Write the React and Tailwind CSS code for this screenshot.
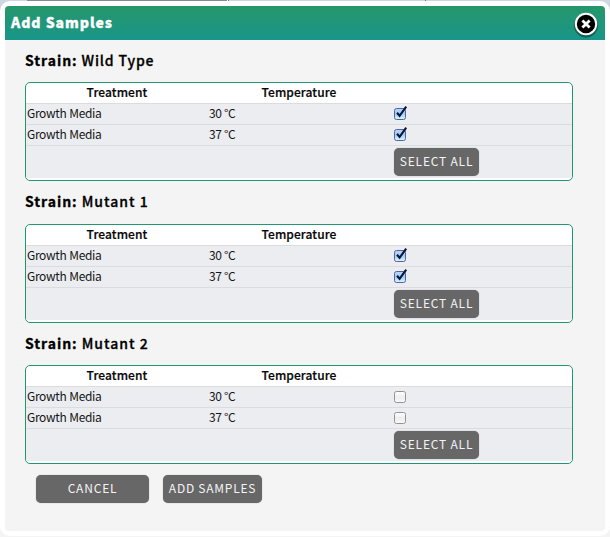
import React from 'react';

const groups = [
  { name: 'Wild Type', checked: true, tracking: 'tracking-[0.85px]', space: '', offset: 'mt-[9px]' },
  { name: 'Mutant 1', checked: true, tracking: 'tracking-[1px]', space: 'mt-[10px]', offset: 'mt-[10px]' },
  { name: 'Mutant 2', checked: false, tracking: 'tracking-[1px]', space: 'mt-[10px]', offset: 'mt-[9px]' },
];

function Button({ children, className }) {
  return (
    <button
      className={`flex h-7 items-center justify-center rounded-[5px] bg-[#676767] pb-[2px] text-[12px] leading-none whitespace-nowrap text-[#f4f4f4] shadow-[0_0_1px_#888] ${className}`}
    >
      {children}
    </button>
  );
}

function Checkbox({ checked }) {
  return (
    <svg width="15" height="16" viewBox="0 0 15 16" className="block">
      <defs>
        <linearGradient id="on" x1="0" y1="0" x2="0" y2="1">
          <stop offset="0" stopColor="#b9d7f5" />
          <stop offset="0.5" stopColor="#9fcdf6" />
          <stop offset="1" stopColor="#dcfaff" />
        </linearGradient>
        <linearGradient id="off" x1="0" y1="0" x2="0" y2="1">
          <stop offset="0" stopColor="#ffffff" />
          <stop offset="0.5" stopColor="#eeeeee" />
          <stop offset="1" stopColor="#fafafa" />
        </linearGradient>
      </defs>
      <rect
        x="0.5"
        y="3.5"
        width="11"
        height="11"
        rx="2"
        fill={checked ? 'url(#on)' : 'url(#off)'}
        stroke={checked ? '#5a5fa5' : '#929295'}
      />
      {checked && (
        <path d="M3 7.8 L5.6 10.8 L12.2 1.6" fill="none" stroke="#0a1636" strokeWidth="2.1" />
      )}
    </svg>
  );
}

function Row({ temp, checked }) {
  return (
    <div className="flex h-[21px] border-t border-[#dcdcde] bg-[#ecedf1] text-[12px] leading-[18px] tracking-[-0.35px] text-[#151515] [word-spacing:0.6px]">
      <div className="w-[183px] pl-px">Growth Media</div>
      <div className="w-[185px] tracking-[-0.5px]">{temp}</div>
      <div className="pt-px">
        <Checkbox checked={checked} />
      </div>
    </div>
  );
}

function StrainTable({ checked, offset }) {
  return (
    <div className={`h-[99px] overflow-hidden rounded-[5px] border border-[#22966f] bg-white ${offset}`}>
      <div className="flex h-5 text-[12px] leading-[17px] font-medium tracking-[0.1px] text-[#050505] [-webkit-text-stroke:0.2px_#050505]">
        <div className="w-[182px] text-center">Treatment</div>
        <div className="w-[182px] text-center">Temperature</div>
      </div>
      <Row temp="30 °C" checked={checked} />
      <Row temp="37 °C" checked={checked} />
      <div className="h-[33px] border-t border-[#dcdcde] bg-[#ecedf1] pt-[2px] pl-[368px]">
        <Button className="w-[85px] tracking-[0.8px]">SELECT ALL</Button>
      </div>
    </div>
  );
}

export default function App() {
  return (
    <div className="h-[537px] w-[610px] overflow-hidden bg-[linear-gradient(#d0d6df_0_50%,#f4f4f4_50%)] font-['Noto_Sans_CJK_SC','Noto_Sans',sans-serif]">
      <div className="flex h-px">
        <div className="w-[27px]" />
        <div className="w-[200px] bg-[#858b96]" />
        <div className="w-px bg-white" />
        <div className="w-px bg-[#777]" />
        <div className="w-[196px]" />
        <div className="w-px bg-[#777]" />
      </div>
      <div className="h-[535px] rounded-[10px] bg-white p-[5px]">
        <div className="h-[525px] overflow-hidden rounded-[4px] bg-[#f4f4f4]">
          <header className="flex h-[34px] justify-between bg-linear-to-b from-[#26966a] to-[#19968a] pr-[5px] pl-[6px]">
            <h1 className="text-[14px] leading-[33px] font-black tracking-[0.95px] text-white [-webkit-text-stroke:0.3px_white]">
              Add Samples
            </h1>
            <svg width="28" height="30" viewBox="0 0 28 30" className="mt-[4px]">
              <circle cx="14" cy="15.5" r="12" fill="#000" opacity="0.35" />
              <circle cx="14" cy="14" r="10.2" fill="#000" stroke="#fff" strokeWidth="2" />
              <path d="M10.4 10.4 L17.6 17.6 M17.6 10.4 L10.4 17.6" stroke="#fff" strokeWidth="2.8" />
            </svg>
          </header>
          <main className="w-[568px] pt-[10px] pl-5">
            {groups.map((g) => (
              <section key={g.name} className={g.space}>
                <h2
                  className={`h-[23px] text-[14px] leading-[20px] font-medium text-black [-webkit-text-stroke:0.3px_black] ${g.tracking}`}
                >
                  <b className="font-bold tracking-[0.95px]">Strain:</b> {g.name}
                </h2>
                <StrainTable checked={g.checked} offset={g.offset} />
              </section>
            ))}
            <div className="mt-[11px] flex gap-[14px] pl-[11px]">
              <Button className="w-[113px] tracking-[0.8px]">CANCEL</Button>
              <Button className="w-[99px] tracking-[0.75px]">ADD SAMPLES</Button>
            </div>
          </main>
        </div>
      </div>
    </div>
  );
}
